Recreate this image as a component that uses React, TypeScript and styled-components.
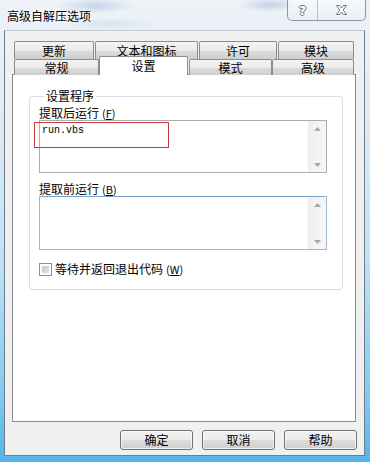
import * as React from "react";
import styled, { createGlobalStyle } from "styled-components";

const GlobalStyle = createGlobalStyle`
  html, body {
    margin: 0;
    padding: 0;
  }
  body {
    font-family: "Noto Sans CJK SC", "Noto Sans", sans-serif;
    font-size: 12px;
    color: #000;
  }
`;

const Window = styled.div`
  width: 370px;
  height: 462px;
  display: flex;
  flex-direction: column;
  overflow: hidden;
  background: linear-gradient(
    180deg,
    #eef2f7 0px,
    #e2ebf3 110px,
    #bfe2f6 260px,
    #7fc9f0 400px,
    #4fb4ea 462px
  );
`;

const TitleBar = styled.div`
  height: 30px;
  display: flex;
  justify-content: space-between;
  align-items: flex-start;
  padding-left: 7px;
  background: radial-gradient(ellipse 40px 8px at 95px 6px, rgba(120, 160, 210, 0.35), transparent),
    radial-gradient(ellipse 30px 7px at 270px 5px, rgba(110, 150, 200, 0.35), transparent),
    radial-gradient(ellipse 50px 6px at 110px 24px, rgba(150, 185, 225, 0.25), transparent);
`;

const Title = styled.div`
  margin-top: 9px;
  line-height: 14px;
  text-shadow: 0 0 6px #fff, 0 0 3px #fff;
`;

const CaptionGroup = styled.div`
  display: flex;
  height: 20px;
  margin-right: 4px;
  border: 1px solid #8a97a6;
  border-top: none;
  border-radius: 0 0 5px 5px;
  background: linear-gradient(180deg, rgba(255, 255, 255, 0.55), rgba(235, 240, 246, 0.7));
  overflow: hidden;
`;

const CaptionButton = styled.div<{ $w: number; $divider?: boolean }>`
  width: ${(p) => p.$w}px;
  display: flex;
  align-items: center;
  justify-content: center;
  border-right: ${(p) => (p.$divider ? "1px solid #b4bfcb" : "none")};
  font-family: "DejaVu Sans", sans-serif;
  font-weight: bold;
  font-size: 13px;
  color: #fff;
  text-shadow: -1px 0 #6c7683, 1px 0 #6c7683, 0 -1px #6c7683, 0 1px #6c7683;
`;

const Client = styled.div`
  flex: 1;
  display: flex;
  flex-direction: column;
  margin: 0 5px 6px 4px;
  padding: 10px 8px 0 7px;
  background: #f0f0f0;
  border: 1px solid #6f7d8a;
  border-top-color: #c2cbd4;
`;

const TabStrip = styled.div`
  display: flex;
  flex-direction: column;
  margin-left: 2px;
`;

const TabRow = styled.div<{ $h: number }>`
  display: flex;
  align-items: flex-start;
  height: ${(p) => p.$h}px;
`;

const Tab = styled.div<{ $w: number; $ml: number; $h: number; $selected?: boolean }>`
  box-sizing: border-box;
  width: ${(p) => p.$w}px;
  height: ${(p) => (p.$selected ? 19 : p.$h)}px;
  margin-left: ${(p) => p.$ml}px;
  margin-top: ${(p) => (p.$selected ? -3 : 0)}px;
  display: flex;
  justify-content: center;
  align-items: ${(p) => (p.$selected ? "flex-start" : "center")};
  padding-top: ${(p) => (p.$selected ? 2 : 0)}px;
  line-height: 14px;
  border: 1px solid #898c95;
  border-bottom: none;
  border-radius: 2px 2px 0 0;
  background: ${(p) =>
    p.$selected ? "#fff" : "linear-gradient(180deg, #f3f3f3 0%, #ebebeb 50%, #dddddd 51%, #cfcfcf 100%)"};
  position: relative;
  z-index: ${(p) => (p.$selected ? 2 : 1)};
`;

const Panel = styled.div`
  box-sizing: border-box;
  width: 344px;
  height: 348px;
  padding: 0 12px 0 16px;
  background: #fff;
  border: 1px solid #898c95;
  position: relative;
  z-index: 0;
`;

const Group = styled.fieldset`
  margin: 14px 0 0 0;
  padding: 3px 15px 13px 9px;
  border: 1px solid #d5dfe5;
  border-radius: 3px;
  position: relative;
`;

const Legend = styled.legend`
  margin-left: 5px;
  padding: 0 2px;
  line-height: 14px;
`;

const FieldLabel = styled.div<{ $mt: number }>`
  margin-top: ${(p) => p.$mt}px;
  line-height: 14px;
  height: 14px;
`;

const Mnemonic = styled.span`
  font-size: 11px;
  margin-left: 3px;
  u {
    text-underline-offset: 1px;
  }
`;

const Edit = styled.div<{ $h: number; $blue?: boolean }>`
  box-sizing: border-box;
  height: ${(p) => p.$h}px;
  display: flex;
  border: 1px solid ${(p) => (p.$blue ? "#9fb9d3" : "#abadb3")};
  border-top-color: ${(p) => (p.$blue ? "#7da2ce" : "#abadb3")};
  background: #fff;
  position: relative;
`;

const EditText = styled.div`
  flex: 1;
  padding: 3px 2px;
  font-family: "Liberation Mono", "DejaVu Sans Mono", monospace;
  font-size: 10px;
  line-height: 14px;
`;

const ScrollBar = styled.div`
  width: 17px;
  display: flex;
  flex-direction: column;
  justify-content: space-between;
  align-items: center;
  padding: 6px 0 5px;
  background: linear-gradient(90deg, #f0f0f0, #f7f7f7);
  border-left: 1px solid #ececec;
`;

const Annotation = styled.div`
  position: absolute;
  left: -6px;
  top: 1px;
  width: 135px;
  height: 26px;
  box-sizing: border-box;
  border: 1px solid #c43a3d;
  pointer-events: none;
`;

const CheckRow = styled.div`
  display: flex;
  align-items: center;
  gap: 3px;
  margin-top: 12px;
  line-height: 14px;
`;

const CheckBox = styled.div`
  box-sizing: border-box;
  width: 13px;
  height: 13px;
  border: 1px solid #8e8f8f;
  background: #fff;
  padding: 2px;
  &::after {
    content: "";
    display: block;
    width: 100%;
    height: 100%;
    background: linear-gradient(135deg, #c4c4c4, #e6e6e6);
  }
`;

const ButtonBar = styled.div`
  display: flex;
  justify-content: flex-end;
  gap: 9px;
  margin-top: 8px;
  margin-right: -1px;
`;

const Button = styled.button`
  box-sizing: border-box;
  width: 73px;
  height: 20px;
  padding: 0;
  font-family: inherit;
  font-size: 12px;
  line-height: 14px;
  color: #000;
  border: 1px solid #707070;
  border-radius: 3px;
  background: linear-gradient(180deg, #f2f2f2 0%, #ebebeb 50%, #dddddd 51%, #cfcfcf 100%);
  box-shadow: inset 0 0 0 1px rgba(255, 255, 255, 0.7);
`;

function Arrow({ up }: { up?: boolean }) {
  return (
    <svg width="7" height="4" viewBox="0 0 7 4">
      <path d={up ? "M0 4 L3.5 0 L7 4 Z" : "M0 0 L3.5 4 L7 0 Z"} fill="#a8a8a8" />
    </svg>
  );
}

const row1 = [
  { label: "更新", w: 80, ml: 0 },
  { label: "文本和图标", w: 103, ml: 1 },
  { label: "许可", w: 78, ml: 1 },
  { label: "模块", w: 76, ml: 1 },
];

const row2 = [
  { label: "常规", w: 85, ml: 0 },
  { label: "设置", w: 89, ml: 0, selected: true },
  { label: "模式", w: 83, ml: 1 },
  { label: "高级", w: 82, ml: 0 },
];

export default function App() {
  return (
    <>
      <GlobalStyle />
      <Window>
        <TitleBar>
          <Title>高级自解压选项</Title>
          <CaptionGroup>
            <CaptionButton $w={29} $divider>
              ?
            </CaptionButton>
            <CaptionButton $w={47}>
              <svg width="11" height="10" viewBox="0 0 11 10">
                <path
                  d="M0.5 0.5 H3.5 L5.5 3 L7.5 0.5 H10.5 L7.2 5 L10.5 9.5 H7.5 L5.5 7 L3.5 9.5 H0.5 L3.8 5 Z"
                  fill="#fff"
                  stroke="#6c7683"
                  strokeWidth="1"
                  strokeLinejoin="round"
                />
              </svg>
            </CaptionButton>
          </CaptionGroup>
        </TitleBar>

        <Client>
          <TabStrip>
            <TabRow $h={18}>
              {row1.map((t) => (
                <Tab key={t.label} $w={t.w} $ml={t.ml} $h={18}>
                  {t.label}
                </Tab>
              ))}
            </TabRow>
            <TabRow $h={15}>
              {row2.map((t) => (
                <Tab key={t.label} $w={t.w} $ml={t.ml} $h={16} $selected={t.selected}>
                  {t.label}
                </Tab>
              ))}
            </TabRow>
          </TabStrip>

          <Panel>
            <Group>
              <Legend>设置程序</Legend>
              <FieldLabel $mt={0}>
                提取后运行
                <Mnemonic>
                  (<u>F</u>)
                </Mnemonic>
              </FieldLabel>
              <Edit $h={53}>
                <EditText>run.vbs</EditText>
                <ScrollBar>
                  <Arrow up />
                  <Arrow />
                </ScrollBar>
                <Annotation />
              </Edit>

              <FieldLabel $mt={9}>
                提取前运行
                <Mnemonic>
                  (<u>B</u>)
                </Mnemonic>
              </FieldLabel>
              <Edit $h={54} $blue>
                <EditText />
                <ScrollBar>
                  <Arrow up />
                  <Arrow />
                </ScrollBar>
              </Edit>

              <CheckRow>
                <CheckBox />
                <span>
                  等待并返回退出代码
                  <Mnemonic>
                    (<u>W</u>)
                  </Mnemonic>
                </span>
              </CheckRow>
            </Group>
          </Panel>

          <ButtonBar>
            <Button>确定</Button>
            <Button>取消</Button>
            <Button>帮助</Button>
          </ButtonBar>
        </Client>
      </Window>
    </>
  );
}
